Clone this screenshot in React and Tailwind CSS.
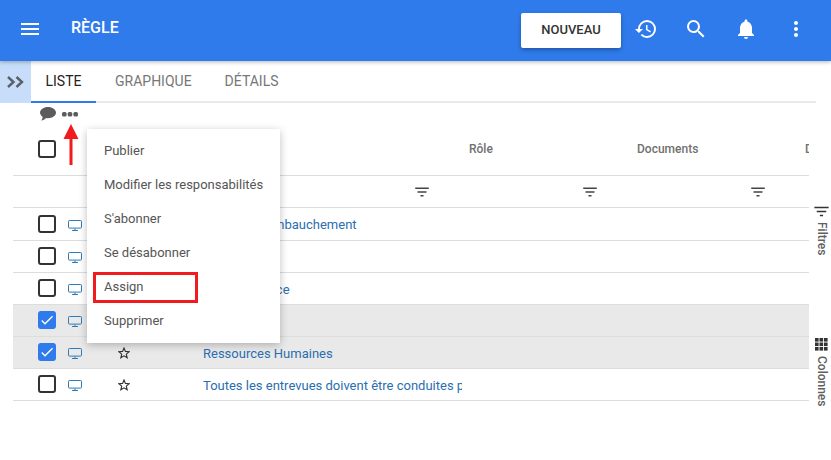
import React from "react";
import { MdMenu, MdHistory, MdSearch, MdNotifications, MdMoreVert, MdFilterList, MdCheck } from "react-icons/md";

const Box = ({ checked }) =>
  checked ? (
    <span className="w-[18px] h-[18px] rounded-[3px] bg-[#2f7bec] flex items-center justify-center text-white">
      <MdCheck size={16} />
    </span>
  ) : (
    <span className="w-[18px] h-[18px] rounded-[3px] border-2 border-[#333333] block" />
  );

const Monitor = () => (
  <svg width="14" height="11" viewBox="0 0 14 11" fill="none" stroke="#2f7ab8" strokeWidth="1">
    <rect x="0.5" y="0.5" width="13" height="7.6" rx="0.8" />
    <path d="M7 8.5v1.8M4 10.5h6" />
  </svg>
);

const Star = () => (
  <svg width="12" height="12" viewBox="0 0 12 12" fill="none" stroke="#333333" strokeWidth="1.1" strokeLinejoin="miter">
    <path d="M6 1L7.4 4.4L11.2 4.7L8.3 7.1L9.2 10.8L6 8.8L2.8 10.8L3.7 7.1L0.8 4.7L4.6 4.4Z" />
  </svg>
);

const Grid = () => (
  <svg width="13" height="13" viewBox="0 0 13 13" fill="#333333">
    {[0, 4.5, 9].flatMap((y) => [0, 4.5, 9].map((x) => <rect key={x + "-" + y} x={x} y={y} width="3.6" height="3.6" />))}
  </svg>
);

const Bubble = () => (
  <svg width="16" height="14" viewBox="0 0 16 14" fill="#5c5c5c">
    <path d="M8 0C3.6 0 0 2.5 0 5.6C0 7.3 1 8.8 2.7 9.9C2.6 11.2 2 12.4 1.2 13.6C3 13.3 4.8 12.5 6.1 11.1C6.7 11.2 7.4 11.3 8 11.3C12.4 11.3 16 8.7 16 5.6C16 2.5 12.4 0 8 0Z" />
  </svg>
);

const Dots = () => (
  <svg width="16" height="5" viewBox="0 0 16 5" fill="#5c5c5c">
    <rect x="0" y="0" width="4.6" height="4.6" rx="1.6" />
    <rect x="5.7" y="0" width="4.6" height="4.6" rx="1.6" />
    <rect x="11.4" y="0" width="4.6" height="4.6" rx="1.6" />
  </svg>
);

const rows = [
  { text: "Politique d'embauchement", h: "h-[33px]" },
  { text: "", h: "h-[32px]" },
  { text: "Test de licence", h: "h-[32px]" },
  { text: "", h: "h-[32px]", sel: true },
  { text: "Ressources Humaines", h: "h-[32px]", sel: true },
  { text: "Toutes les entrevues doivent être conduites par deux personnes", h: "h-[32px]" },
];

const menu = ["Publier", "Modifier les responsabilités", "S'abonner", "Se désabonner", "Assign", "Supprimer"];

export default function App() {
  return (
    <div className="relative w-[831px] h-[460px] overflow-hidden bg-white flex flex-col font-['Roboto',sans-serif]">
      <header className="relative z-10 h-[61px] shrink-0 bg-[#2f7bec] shadow-[0_1px_4px_rgba(0,0,0,0.3)] flex items-center text-white">
        <MdMenu size={24} className="ml-[18px] -mt-[3px]" />
        <h1 className="ml-[29px] text-[16px] font-medium -mt-[6px]">RÈGLE</h1>
        <button className="ml-auto w-[100px] h-[35px] -mt-[1px] bg-white rounded-[2px] text-[#333333] text-[13px] font-medium shadow-[0_2px_4px_rgba(0,0,0,0.3)]">
          NOUVEAU
        </button>
        <div className="flex items-center ml-[13px] mr-[23px] gap-[26px] -mt-[3px]">
          <MdHistory size={24} />
          <MdSearch size={24} />
          <MdNotifications size={24} />
          <MdMoreVert size={24} />
        </div>
      </header>

      <div className="h-[42px] shrink-0 flex">
        <div className="w-[31px] bg-[#c8ddf9] flex items-center justify-center">
          <svg width="17" height="12" viewBox="0 0 17 12" fill="none" stroke="#5a6068" strokeWidth="2.4">
            <path d="M1 1L6.5 6L1 11M9.5 1L15 6L9.5 11" />
          </svg>
        </div>
        <nav className="w-[785px] flex border-b-2 border-[#eaeaea] text-[14px] font-normal">
          <span className="w-[65px] h-[42px] flex items-center justify-center text-[#222222] border-b-2 border-[#2f7bec]">LISTE</span>
          <span className="ml-[19px] h-[40px] flex items-center text-[#777777]">GRAPHIQUE</span>
          <span className="ml-[33px] h-[40px] flex items-center text-[#777777]">DÉTAILS</span>
        </nav>
      </div>

      <main className="flex flex-1 min-h-0">
        <section className="ml-[13px] w-[796px] shrink-0 overflow-hidden">
          <div className="h-[21px] pl-[27px] flex items-center gap-[6px]">
            <Bubble />
            <span className="mt-[2px]"><Dots /></span>
          </div>
          <div className="h-[52px] pb-[1px] border-b border-[#dddddd] flex items-center text-[12px] font-medium text-[#707070] whitespace-nowrap">
            <span className="ml-[25px] shrink-0"><Box /></span>
            <span className="ml-[413px] w-[168px] shrink-0">Rôle</span>
            <span className="w-[168px] shrink-0">Documents</span>
            <span className="shrink-0">Description</span>
          </div>
          <div className="h-[32px] border-b border-[#dddddd] flex items-center text-[#444444]">
            <MdFilterList size={18} className="ml-[400px] shrink-0" />
            <MdFilterList size={18} className="ml-[150px] shrink-0" />
            <MdFilterList size={18} className="ml-[150px] shrink-0" />
          </div>
          {rows.map((r, i) => (
            <div key={i} className={`${r.h} border-b border-[#dddddd] flex items-center ${r.sel ? "bg-[#e9e9e9]" : ""}`}>
              <span className="ml-[25px] -mt-[1px] shrink-0"><Box checked={r.sel} /></span>
              <span className="ml-[12px] mt-[2px] flex shrink-0"><Monitor /></span>
              <span className="ml-[36px] mt-[1px] flex shrink-0"><Star /></span>
              <span className="ml-[73px] mt-[2px] w-[259px] shrink-0 overflow-hidden whitespace-nowrap text-[13px] text-[#2a6eaf]">{r.text}</span>
            </div>
          ))}
        </section>
        <aside className="flex-1 pl-[3px] flex flex-col items-center text-[#5f5f5f]">
          <MdFilterList size={19} className="mt-[99px] text-[#333333] shrink-0" />
          <span className="mt-[1px] text-[12px] font-medium [writing-mode:vertical-rl]">Filtres</span>
          <div className="mt-[83px] shrink-0"><Grid /></div>
          <span className="mt-[5px] text-[12px] font-medium [writing-mode:vertical-rl]">Colonnes</span>
        </aside>
      </main>

      <ul className="absolute z-20 left-[87px] top-[129px] w-[193px] h-[214px] bg-white shadow-[0_2px_8px_rgba(0,0,0,0.25)] py-[5px] text-[13px] text-[#555555]">
        {menu.map((m) => (
          <li key={m} className="h-[34px] pl-[17px] flex items-center">{m}</li>
        ))}
      </ul>
      <div className="absolute z-30 left-[93px] top-[272px] w-[105px] h-[31px] border-[3px] border-[#f01a1f]" />
      <svg className="absolute z-30 left-[63px] top-[124px]" width="16" height="42" viewBox="0 0 16 42" fill="#f01a1f">
        <path d="M8 0L15.5 15H9.5V41H6.5V15H0.5Z" />
      </svg>
    </div>
  );
}
